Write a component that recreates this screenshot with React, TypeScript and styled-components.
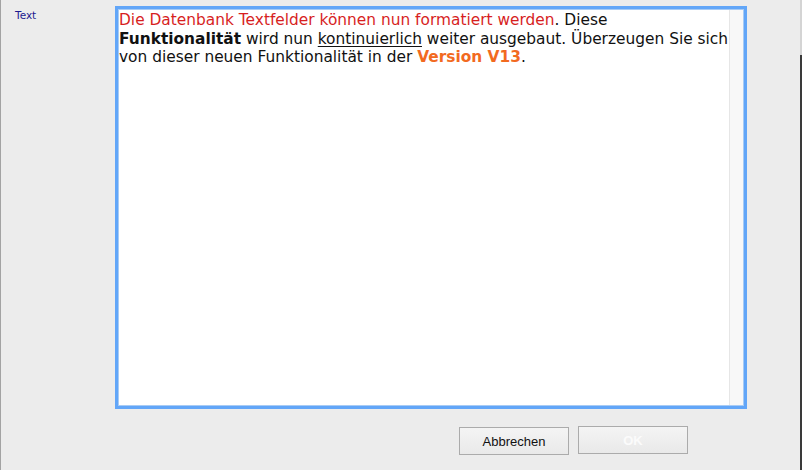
import React from 'react';
import styled, { createGlobalStyle } from 'styled-components';

const GlobalStyle = createGlobalStyle`
  html, body {
    margin: 0;
    padding: 0;
    background: #ececec;
  }
  * {
    box-sizing: border-box;
  }
`;

const Window = styled.div`
  width: 802px;
  height: 470px;
  display: flex;
  background: #ececec;
  border-left: 1px solid #a3a3a3;
  overflow: hidden;
`;

const Dialog = styled.div`
  flex: 1;
  display: grid;
  grid-template-columns: 114px 632px;
  grid-template-rows: 403px auto;
  padding-top: 6px;
  row-gap: 17px;
`;

const FieldLabel = styled.div`
  padding: 3px 0 0 14px;
  font-family: 'DejaVu Sans', Verdana, sans-serif;
  font-size: 10.5px;
  color: #1c1a8f;
`;

const EditorFrame = styled.div`
  display: flex;
  border: 3px solid #62a6f8;
  background: #ffffff;
  box-shadow: inset 0 0 0 1px #a7cbf5;
`;

const Editor = styled.div`
  flex: 1;
  padding: 2px 0 0 1px;
  font-family: 'DejaVu Sans', Verdana, sans-serif;
  font-size: 15.4px;
  line-height: 18.5px;
  color: #111111;
`;

const Highlight = styled.span`
  color: #d71f1f;
`;

const Strong = styled.b`
  font-weight: 700;
`;

const Accent = styled.b`
  font-weight: 700;
  color: #f26a1f;
`;

const Underline = styled.u`
  text-decoration-thickness: 1px;
  text-underline-offset: 2px;
`;

const ScrollTrack = styled.div`
  width: 14px;
  margin: 1px 1px 1px 0;
  background: #f8f8f8;
  border-left: 1px solid #e6e6e6;
`;

const ButtonRow = styled.div`
  grid-column: 2;
  display: flex;
  justify-content: flex-end;
  align-items: flex-start;
  gap: 9px;
  padding-right: 59px;
`;

const Button = styled.button<{ $disabled?: boolean }>`
  width: 110px;
  height: 28px;
  margin-top: ${({ $disabled }) => ($disabled ? '0' : '1px')};
  border: 1px solid #ababab;
  border-radius: 0;
  background: linear-gradient(#f4f4f4, #e9e9e9);
  font-family: 'Liberation Sans', Arial, sans-serif;
  font-size: 13px;
  font-weight: ${({ $disabled }) => ($disabled ? 700 : 400)};
  color: ${({ $disabled }) => ($disabled ? '#fbfbfb' : '#111111')};
  padding: 0;
`;

const RightEdge = styled.div`
  width: 2px;
  display: flex;
  flex-direction: column;
`;

const EdgeTop = styled.div`
  height: 55px;
  background: #d4d4d4;
`;

const EdgeBottom = styled.div`
  flex: 1;
  background: #3a3a3a;
`;

export default function App() {
  return (
    <>
      <GlobalStyle />
      <Window>
        <Dialog>
          <FieldLabel>Text</FieldLabel>
          <EditorFrame>
            <Editor>
              <Highlight>Die Datenbank Textfelder können nun formatiert werden</Highlight>. Diese{' '}
              <Strong>Funktionalität</Strong> wird nun <Underline>kontinuierlich</Underline> weiter
              ausgebaut. Überzeugen Sie sich von dieser neuen Funktionalität in der{' '}
              <Accent>Version V13</Accent>.
            </Editor>
            <ScrollTrack />
          </EditorFrame>
          <ButtonRow>
            <Button>Abbrechen</Button>
            <Button $disabled disabled>
              OK
            </Button>
          </ButtonRow>
        </Dialog>
        <RightEdge>
          <EdgeTop />
          <EdgeBottom />
        </RightEdge>
      </Window>
    </>
  );
}
